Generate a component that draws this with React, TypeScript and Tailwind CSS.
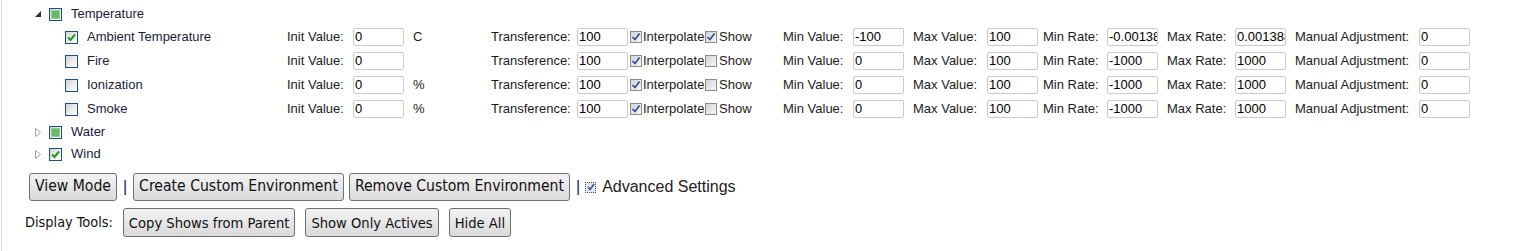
import React from 'react'

type Sensor = {
  name: string
  on: boolean
  unit: string
  show: boolean
  min: string
  minRate: string
  maxRate: string
}

const sensors: Sensor[] = [
  { name: 'Ambient Temperature', on: true, unit: 'C', show: true, min: '-100', minRate: '-0.00138', maxRate: '0.001388' },
  { name: 'Fire', on: false, unit: '', show: false, min: '0', minRate: '-1000', maxRate: '1000' },
  { name: 'Ionization', on: false, unit: '%', show: false, min: '0', minRate: '-1000', maxRate: '1000' },
  { name: 'Smoke', on: false, unit: '%', show: false, min: '0', minRate: '-1000', maxRate: '1000' },
]

const TreeBox = ({ state }: { state: 'checked' | 'partial' | 'empty' }) => (
  <span className="flex h-[13px] w-[13px] shrink-0 items-center justify-center border border-[#1d4f7c] bg-linear-to-br from-[#d6d6d6] to-white">
    {state === 'partial' && <span className="h-[9px] w-[9px] border border-[#8fd08f] bg-[#66bb66]" />}
    {state === 'checked' && (
      <svg width="11" height="11" viewBox="0 0 11 11">
        <path d="M2 5.5 L4.5 8 L9 2.5" fill="none" stroke="#1f9a1f" strokeWidth="2" />
      </svg>
    )}
  </span>
)

const SmallBox = ({ on }: { on: boolean }) => (
  <span className="flex h-[12px] w-[12px] shrink-0 items-center justify-center border border-[#8a8a8a] bg-linear-to-br from-[#d4d4d4] to-[#f7f7f7]">
    {on && (
      <svg width="10" height="10" viewBox="0 0 10 10">
        <path d="M1.5 5 L4 7.5 L8.5 1.5" fill="none" stroke="#2a4c9c" strokeWidth="1.6" />
      </svg>
    )}
  </span>
)

const Field = ({ value }: { value: string }) => (
  <input
    readOnly
    value={value}
    className="h-[18px] w-[51px] shrink-0 rounded-[2px] border border-[#cbcbcb] bg-white pl-px pr-0 text-[13px] text-black outline-none"
  />
)

const Expanded = () => (
  <svg width="6" height="6" viewBox="0 0 6 6" className="shrink-0">
    <path d="M6 0 L6 6 L0 6 Z" fill="#333" />
  </svg>
)

const Collapsed = () => (
  <svg width="6" height="9" viewBox="0 0 6 9" className="shrink-0">
    <path d="M0.5 0.5 L5.5 4.5 L0.5 8.5 Z" fill="none" stroke="#a0a0a0" />
  </svg>
)

const Btn = ({ children, className = '' }: { children: React.ReactNode; className?: string }) => (
  <button
    className={`rounded-[3px] border border-[#707070] bg-linear-to-b from-[#f3f3f3] to-[#dadada] px-[5px] font-['DejaVu_Sans_Condensed','DejaVu_Sans',sans-serif] font-stretch-condensed text-[#111] ${className}`}
  >
    {children}
  </button>
)

export default function App() {
  return (
    <div className="ml-px h-[251px] w-[1532px] border-l border-[#d9d9d9] bg-white font-['Liberation_Sans',Arial,sans-serif] text-[13px] text-[#1b1b1b]">
      <div className="pt-[3px]">
        <div className="flex h-[22px] items-center pl-[33px]">
          <Expanded />
          <span className="ml-[8px]">
            <TreeBox state="partial" />
          </span>
          <span className="ml-[9px] text-[#1a1a3a]">Temperature</span>
        </div>

        {sensors.map((s) => (
          <div key={s.name} className="flex h-[24px] items-center pl-[63px]">
            <TreeBox state={s.on ? 'checked' : 'empty'} />
            <span className="ml-[9px] w-[200px] text-[#1a1a3a]">{s.name}</span>
            <span className="w-[66px]">Init Value:</span>
            <Field value="0" />
            <span className="ml-[9px] w-[78px]">{s.unit}</span>
            <span className="w-[86px]">Transference:</span>
            <Field value="100" />
            <span className="ml-[2px] flex w-[75px] items-center">
              <SmallBox on />
              <span className="ml-px">Interpolate</span>
            </span>
            <span className="flex w-[78px] items-center">
              <SmallBox on={s.show} />
              <span className="ml-[2px]">Show</span>
            </span>
            <span className="w-[70px]">Min Value:</span>
            <Field value={s.min} />
            <span className="ml-[9px] w-[74px]">Max Value:</span>
            <Field value="100" />
            <span className="ml-[5px] w-[64px]">Min Rate:</span>
            <Field value={s.minRate} />
            <span className="ml-[9px] w-[68px]">Max Rate:</span>
            <Field value={s.maxRate} />
            <span className="ml-[9px] w-[124px]">Manual Adjustment:</span>
            <Field value="0" />
          </div>
        ))}

        <div className="flex h-[22px] items-center pl-[33px]">
          <Collapsed />
          <span className="ml-[8px]">
            <TreeBox state="partial" />
          </span>
          <span className="ml-[9px] text-[#1a1a3a]">Water</span>
        </div>
        <div className="flex h-[22px] items-center pl-[33px]">
          <Collapsed />
          <span className="ml-[8px]">
            <TreeBox state="checked" />
          </span>
          <span className="ml-[9px] text-[#1a1a3a]">Wind</span>
        </div>
      </div>

      <div className="mt-[8px] flex items-center pl-[27px]">
        <Btn className="h-[28px] text-[15.6px]">View Mode</Btn>
        <span className="mx-[6px] text-[16px] text-[#1a1a6e]">|</span>
        <Btn className="h-[28px] text-[15.6px]">Create Custom Environment</Btn>
        <Btn className="ml-[5px] h-[28px] text-[15.6px]">Remove Custom Environment</Btn>
        <span className="ml-[6px] text-[16px] text-[#1a1a6e]">|</span>
        <span className="ml-[5px] flex h-[11px] w-[11px] items-center justify-center border border-dotted border-[#555] bg-[#e4e4ee]">
          <svg width="8" height="8" viewBox="0 0 8 8">
            <path d="M1 4 L3 6.5 L7 1" fill="none" stroke="#2a4c9c" strokeWidth="1.4" />
          </svg>
        </span>
        <span className="ml-[6px] text-[16px] text-[#222]">Advanced Settings</span>
      </div>

      <div className="mt-[7px] flex items-center pl-[23px]">
        <span className="font-['DejaVu_Sans_Condensed','DejaVu_Sans',sans-serif] text-[14.4px] font-stretch-condensed text-[#111]">
          Display Tools:
        </span>
        <Btn className="ml-[10px] h-[29px] text-[14.6px]">Copy Shows from Parent</Btn>
        <Btn className="ml-[10px] h-[29px] text-[14.6px]">Show Only Actives</Btn>
        <Btn className="ml-[10px] h-[29px] text-[14.6px]">Hide All</Btn>
      </div>
    </div>
  )
}
